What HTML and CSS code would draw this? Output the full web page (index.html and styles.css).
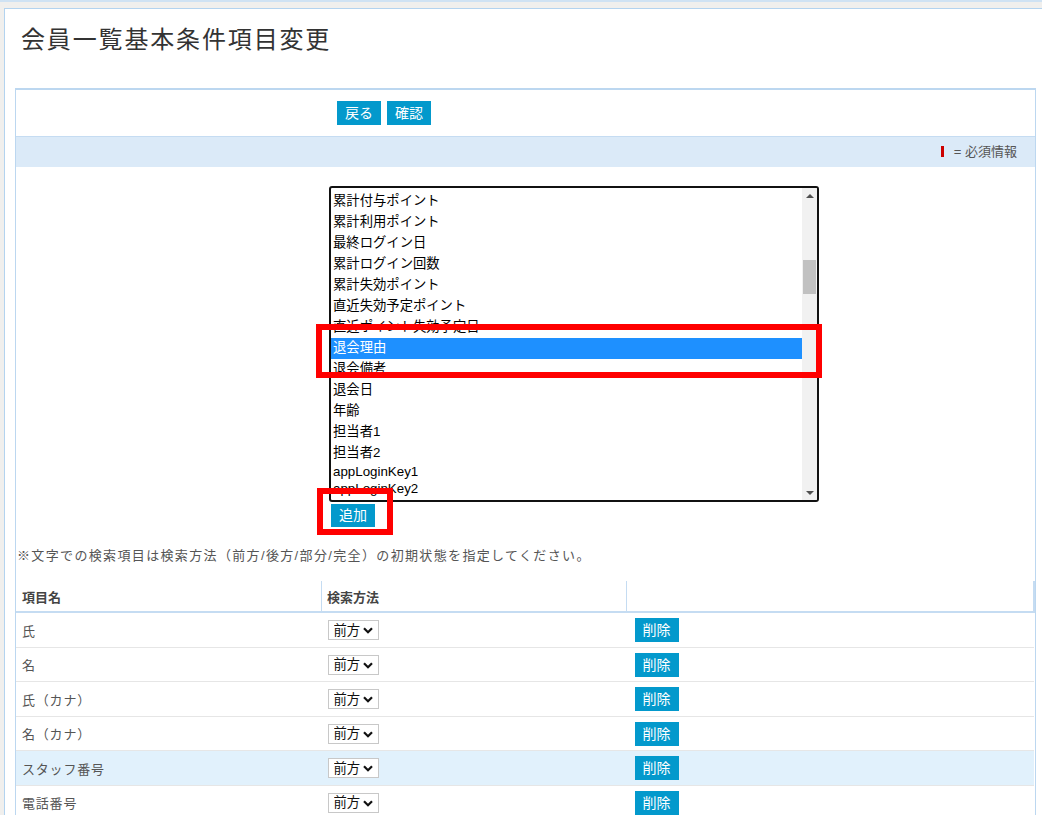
FILE: index.html
```html
<!DOCTYPE html>
<html lang="ja">
<head>
    <meta charset="UTF-8">
    <meta name="viewport" content="width=device-width, initial-scale=1.0">
    <title>会員一覧基本条件項目変更</title>
    <link rel="stylesheet" href="styles.css">
</head>
<body>
    <div class="page">
        <h1>会員一覧基本条件項目変更</h1>

        <div class="panel">
            <div class="actions">
                <button class="btn">戻る</button>
                <button class="btn">確認</button>
            </div>

            <div class="band">
                <span class="req-mark"></span>= 必須情報
            </div>

            <div class="picker">
                <div class="listbox">
                    <ul class="options">
                        <li>累計付与ポイント</li>
                        <li>累計利用ポイント</li>
                        <li>最終ログイン日</li>
                        <li>累計ログイン回数</li>
                        <li>累計失効ポイント</li>
                        <li>直近失効予定ポイント</li>
                        <li>直近ポイント失効予定日</li>
                        <li class="selected">退会理由</li>
                        <li>退会備考</li>
                        <li>退会日</li>
                        <li>年齢</li>
                        <li>担当者1</li>
                        <li>担当者2</li>
                        <li class="latin">appLoginKey1</li>
                        <li class="latin">appLoginKey2</li>
                    </ul>
                    <div class="scrollbar">
                        <span class="sb-arrow sb-up"></span>
                        <div class="sb-track"><div class="sb-thumb"></div></div>
                        <span class="sb-arrow sb-down"></span>
                    </div>
                </div>
                <button class="btn btn-add">追加</button>

                <!-- 注記用の赤枠 -->
                <div class="mark mark-option"></div>
                <div class="mark mark-add"></div>
            </div>

            <p class="note">※文字での検索項目は検索方法（前方/後方/部分/完全）の初期状態を指定してください。</p>

            <table class="table">
                <thead>
                    <tr>
                        <th class="col-name">項目名</th>
                        <th class="col-method">検索方法</th>
                        <th class="col-action"></th>
                    </tr>
                </thead>
                <tbody>
                    <tr>
                        <td>氏</td>
                        <td><span class="sel-wrap"><select><option>前方</option><option>後方</option><option>部分</option><option>完全</option></select><svg class="chev" viewBox="0 0 10 7"><path d="M1 1.2 5 5.2 9 1.2" /></svg></span></td>
                        <td class="cell-action"><button class="btn">削除</button></td>
                    </tr>
                    <tr>
                        <td>名</td>
                        <td><span class="sel-wrap"><select><option>前方</option><option>後方</option><option>部分</option><option>完全</option></select><svg class="chev" viewBox="0 0 10 7"><path d="M1 1.2 5 5.2 9 1.2" /></svg></span></td>
                        <td class="cell-action"><button class="btn">削除</button></td>
                    </tr>
                    <tr>
                        <td>氏（カナ）</td>
                        <td><span class="sel-wrap"><select><option>前方</option><option>後方</option><option>部分</option><option>完全</option></select><svg class="chev" viewBox="0 0 10 7"><path d="M1 1.2 5 5.2 9 1.2" /></svg></span></td>
                        <td class="cell-action"><button class="btn">削除</button></td>
                    </tr>
                    <tr>
                        <td>名（カナ）</td>
                        <td><span class="sel-wrap"><select><option>前方</option><option>後方</option><option>部分</option><option>完全</option></select><svg class="chev" viewBox="0 0 10 7"><path d="M1 1.2 5 5.2 9 1.2" /></svg></span></td>
                        <td class="cell-action"><button class="btn">削除</button></td>
                    </tr>
                    <tr class="hover">
                        <td>スタッフ番号</td>
                        <td><span class="sel-wrap"><select><option>前方</option><option>後方</option><option>部分</option><option>完全</option></select><svg class="chev" viewBox="0 0 10 7"><path d="M1 1.2 5 5.2 9 1.2" /></svg></span></td>
                        <td class="cell-action"><button class="btn">削除</button></td>
                    </tr>
                    <tr>
                        <td>電話番号</td>
                        <td><span class="sel-wrap"><select><option>前方</option><option>後方</option><option>部分</option><option>完全</option></select><svg class="chev" viewBox="0 0 10 7"><path d="M1 1.2 5 5.2 9 1.2" /></svg></span></td>
                        <td class="cell-action"><button class="btn">削除</button></td>
                    </tr>
                </tbody>
            </table>
        </div>
    </div>
</body>
</html>
```

FILE: styles.css
```css
body { margin: 0; padding: 6px 0 0 4px; border-top: 2px solid #cfe2f3; background: #f0efed; font-family: "Liberation Sans", "Noto Sans CJK JP", sans-serif; color: #555; overflow: hidden; }
.page { width: 1060px; min-height: 900px; background: #fff; border-top: 1px solid #b3d3ef; border-left: 1px solid #b3d3ef; }
h1 { margin: 0 0 30px; padding: 13px 0 0 16px; font-size: 24px; line-height: 36px; font-weight: normal; letter-spacing: 1.85px; color: #333; }

.panel { width: 1021px; margin-left: 10px; box-sizing: border-box; border: 1px solid #bcd7f0; border-top-width: 2px; border-bottom: none; }
.actions { display: flex; gap: 6px; padding: 11px 0 11px 321px; }
.btn { height: 24px; padding: 0 8px; border: none; border-radius: 0; background: #0399cc; color: #fff; font-family: inherit; font-size: 14px; line-height: 24px; cursor: pointer; }
.band { height: 30px; line-height: 30px; border-top: 1px solid #c5dcf2; background: #dbeaf8; text-align: right; padding-right: 18px; font-size: 13px; color: #555; }
.req-mark { display: inline-block; width: 3px; height: 11px; margin-right: 10px; background: #c00; vertical-align: -1px; }

.picker { position: relative; padding: 19px 0 0 313px; }
.listbox { display: flex; width: 490px; height: 316px; box-sizing: border-box; border: 2px solid #111; border-radius: 3px; overflow: hidden; background: #fff; }
.options { flex: 1; margin: 0; padding: 3px 0 0; list-style: none; overflow: hidden; font-size: 13.333px; color: #000; }
.options li { padding: 0 2px 1px; line-height: 20px; white-space: nowrap; }
.options li.latin { line-height: 16px; }
.options li.selected { background: #1e90ff; color: #fff; }
.scrollbar { width: 15px; display: flex; flex-direction: column; background: #f1f1f1; }
.sb-arrow { height: 15px; display: flex; justify-content: center; align-items: center; }
.sb-arrow::before { content: ""; border-left: 4px solid transparent; border-right: 4px solid transparent; }
.sb-up::before { border-bottom: 4px solid #505050; }
.sb-down::before { border-top: 4px solid #505050; }
.sb-track { flex: 1; padding-top: 57px; }
.sb-thumb { height: 34px; margin: 0 1px; background: #c1c1c1; }
.btn-add { display: block; margin: 2px 0 0 2px; height: 23px; line-height: 23px; }
.mark { position: absolute; box-sizing: border-box; border: 6px solid #f00; }
.mark-option { left: 300px; top: 157px; width: 506px; height: 54px; }
.mark-add { left: 301px; top: 321px; width: 76px; height: 47px; }

.note { margin: 19px 0 15px 1px; font-size: 13px; line-height: 20px; letter-spacing: 1.35px; color: #555; }

.table { width: 100%; border-collapse: collapse; font-size: 13px; }
.table th { height: 30px; padding: 0 6px; text-align: left; font-weight: bold; color: #444; border-bottom: 2px solid #c5dcf2; }
.table th.col-name { width: 293px; }
.table th.col-method { width: 293px; border-left: 1px solid #c5dcf2; padding-left: 5px; }
.table th.col-action { border-left: 1px solid #c5dcf2; border-right: 2px solid #c5dcf2; }
.table td { padding: 5px 6px 4.6px; border-bottom: 1px solid #e6e6e6; letter-spacing: 0.8px; color: #555; vertical-align: middle; }
.table td.cell-action { padding-left: 8px; }
.table tr.hover td { background: #e1f1fc; }
.sel-wrap { position: relative; display: inline-block; vertical-align: middle; }
.sel-wrap select { appearance: none; -webkit-appearance: none; width: 51px; height: 20px; padding: 0 0 0 5px; border: 1px solid #c8c8c8; border-radius: 0; background: #fff; font-family: inherit; font-size: 13.333px; color: #111; letter-spacing: 0; }
.chev { position: absolute; right: 6px; top: 7px; width: 10px; height: 7px; pointer-events: none; fill: none; stroke: #111; stroke-width: 2.2; }
```
